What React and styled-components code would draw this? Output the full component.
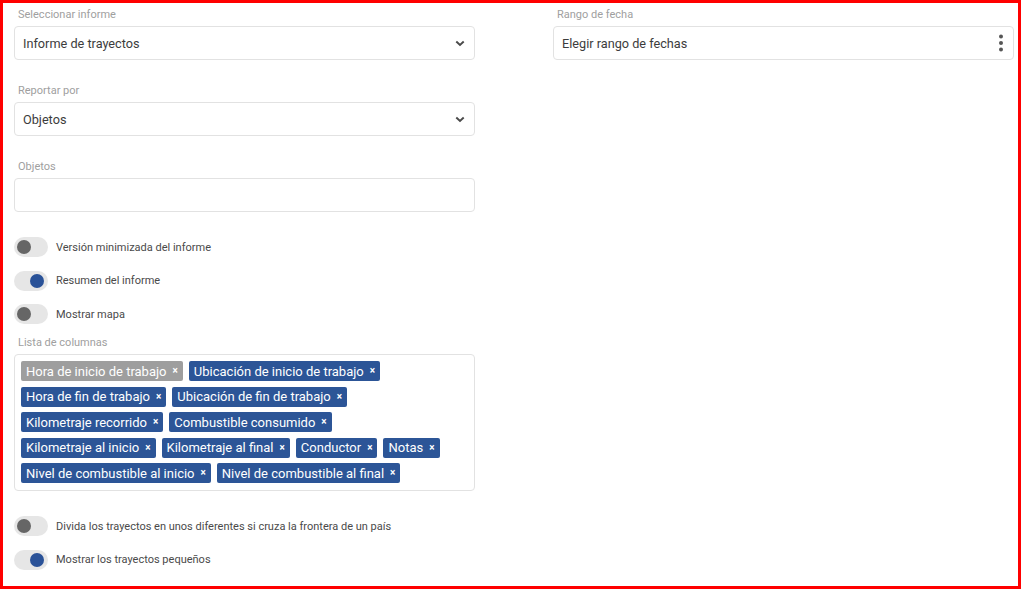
import React from "react";
import styled, { createGlobalStyle } from "styled-components";

const Global = createGlobalStyle`
  html, body { margin: 0; padding: 0; background: #fff; }
  body { font-family: Roboto, "Liberation Sans", Arial, sans-serif; }
  * { box-sizing: border-box; }
`;

const Frame = styled.div`
  width: 1021px;
  height: 589px;
  border: 3px solid #ff0000;
  padding: 4px 4px 0 11px;
  display: grid;
  grid-template-columns: 461px 461px;
  column-gap: 78px;
  align-items: start;
  overflow: hidden;
`;

const Column = styled.div`
  display: flex;
  flex-direction: column;
`;

const Field = styled.div`
  display: flex;
  flex-direction: column;
  margin-bottom: ${(p) => p.$mb ?? 23}px;
`;

const Label = styled.div`
  font-size: 11px;
  line-height: 16px;
  height: 16px;
  color: #a0a0a0;
  padding-left: 4px;
  margin-bottom: 3px;
`;

const Box = styled.div`
  height: 34px;
  border: 1px solid #e2e2e2;
  border-radius: 4px;
  display: flex;
  align-items: center;
  justify-content: space-between;
  padding: 0 9px 0 8px;
  font-size: 12.7px;
  color: #3c3c3c;
`;

const Chevron = () => (
  <svg width="10" height="7" viewBox="0 0 10 7">
    <path d="M1.3 1.5 L5 5 L8.7 1.5" fill="none" stroke="#4a4a4a" strokeWidth="1.9" />
  </svg>
);

const Kebab = () => (
  <svg width="6" height="18" viewBox="0 0 6 18">
    <circle cx="3" cy="2.5" r="2" fill="#555" />
    <circle cx="3" cy="9" r="2" fill="#555" />
    <circle cx="3" cy="15.5" r="2" fill="#555" />
  </svg>
);

const ToggleGroup = styled.div`
  display: flex;
  flex-direction: column;
  gap: 13.5px;
  padding-top: ${(p) => p.$pt ?? 0}px;
  margin-bottom: ${(p) => p.$mb ?? 0}px;
`;

const ToggleRow = styled.div`
  display: flex;
  align-items: center;
  height: 20px;
  gap: 8px;
`;

const Track = styled.div`
  position: relative;
  width: 34px;
  height: 20px;
  border-radius: 10px;
  background: #e6e6e6;
  flex: none;
`;

const Knob = styled.div`
  position: absolute;
  top: 3px;
  left: ${(p) => (p.$on ? 16 : 3)}px;
  width: 14px;
  height: 14px;
  border-radius: 50%;
  background: ${(p) => (p.$on ? "#2a5298" : "#666666")};
`;

const ToggleText = styled.span`
  font-size: 11px;
  color: #4a4a4a;
`;

const Toggle = ({ on, children }) => (
  <ToggleRow>
    <Track>
      <Knob $on={on} />
    </Track>
    <ToggleText>{children}</ToggleText>
  </ToggleRow>
);

const ChipBox = styled.div`
  border: 1px solid #e2e2e2;
  border-radius: 4px;
  padding: 6px 7px 7px 6px;
  display: flex;
  flex-wrap: wrap;
  column-gap: 6px;
  row-gap: 5.5px;
  align-content: flex-start;
`;

const Chip = styled.div`
  height: 20px;
  display: inline-flex;
  align-items: center;
  gap: 6px;
  padding: 0 5px 0 5px;
  border-radius: 2px;
  background: ${(p) => (p.$muted ? "#9e9e9e" : "#2c5597")};
  color: #fff;
  font-size: 13px;
  white-space: nowrap;
`;

const Close = styled.span`
  font-size: 10px;
  font-weight: 700;
  line-height: 1;
`;

const chips = [
  ["Hora de inicio de trabajo", true],
  ["Ubicación de inicio de trabajo"],
  ["Hora de fin de trabajo"],
  ["Ubicación de fin de trabajo"],
  ["Kilometraje recorrido"],
  ["Combustible consumido"],
  ["Kilometraje al inicio"],
  ["Kilometraje al final"],
  ["Conductor"],
  ["Notas"],
  ["Nivel de combustible al inicio"],
  ["Nivel de combustible al final"],
];

export default function App() {
  return (
    <>
      <Global />
      <Frame>
        <Column>
          <Field>
            <Label>Seleccionar informe</Label>
            <Box>
              <span>Informe de trayectos</span>
              <Chevron />
            </Box>
          </Field>
          <Field>
            <Label>Reportar por</Label>
            <Box>
              <span>Objetos</span>
              <Chevron />
            </Box>
          </Field>
          <Field $mb={0}>
            <Label>Objetos</Label>
            <Box />
          </Field>
          <ToggleGroup $pt={25} $mb={11}>
            <Toggle>Versión minimizada del informe</Toggle>
            <Toggle on>Resumen del informe</Toggle>
            <Toggle>Mostrar mapa</Toggle>
          </ToggleGroup>
          <Field $mb={0}>
            <Label>Lista de columnas</Label>
            <ChipBox>
              {chips.map(([t, m]) => (
                <Chip key={t} $muted={m}>
                  {t}
                  <Close>×</Close>
                </Chip>
              ))}
            </ChipBox>
          </Field>
          <ToggleGroup $pt={25}>
            <Toggle>Divida los trayectos en unos diferentes si cruza la frontera de un país</Toggle>
            <Toggle on>Mostrar los trayectos pequeños</Toggle>
          </ToggleGroup>
        </Column>
        <Column>
          <Field>
            <Label>Rango de fecha</Label>
            <Box>
              <span>Elegir rango de fechas</span>
              <Kebab />
            </Box>
          </Field>
        </Column>
      </Frame>
    </>
  );
}
